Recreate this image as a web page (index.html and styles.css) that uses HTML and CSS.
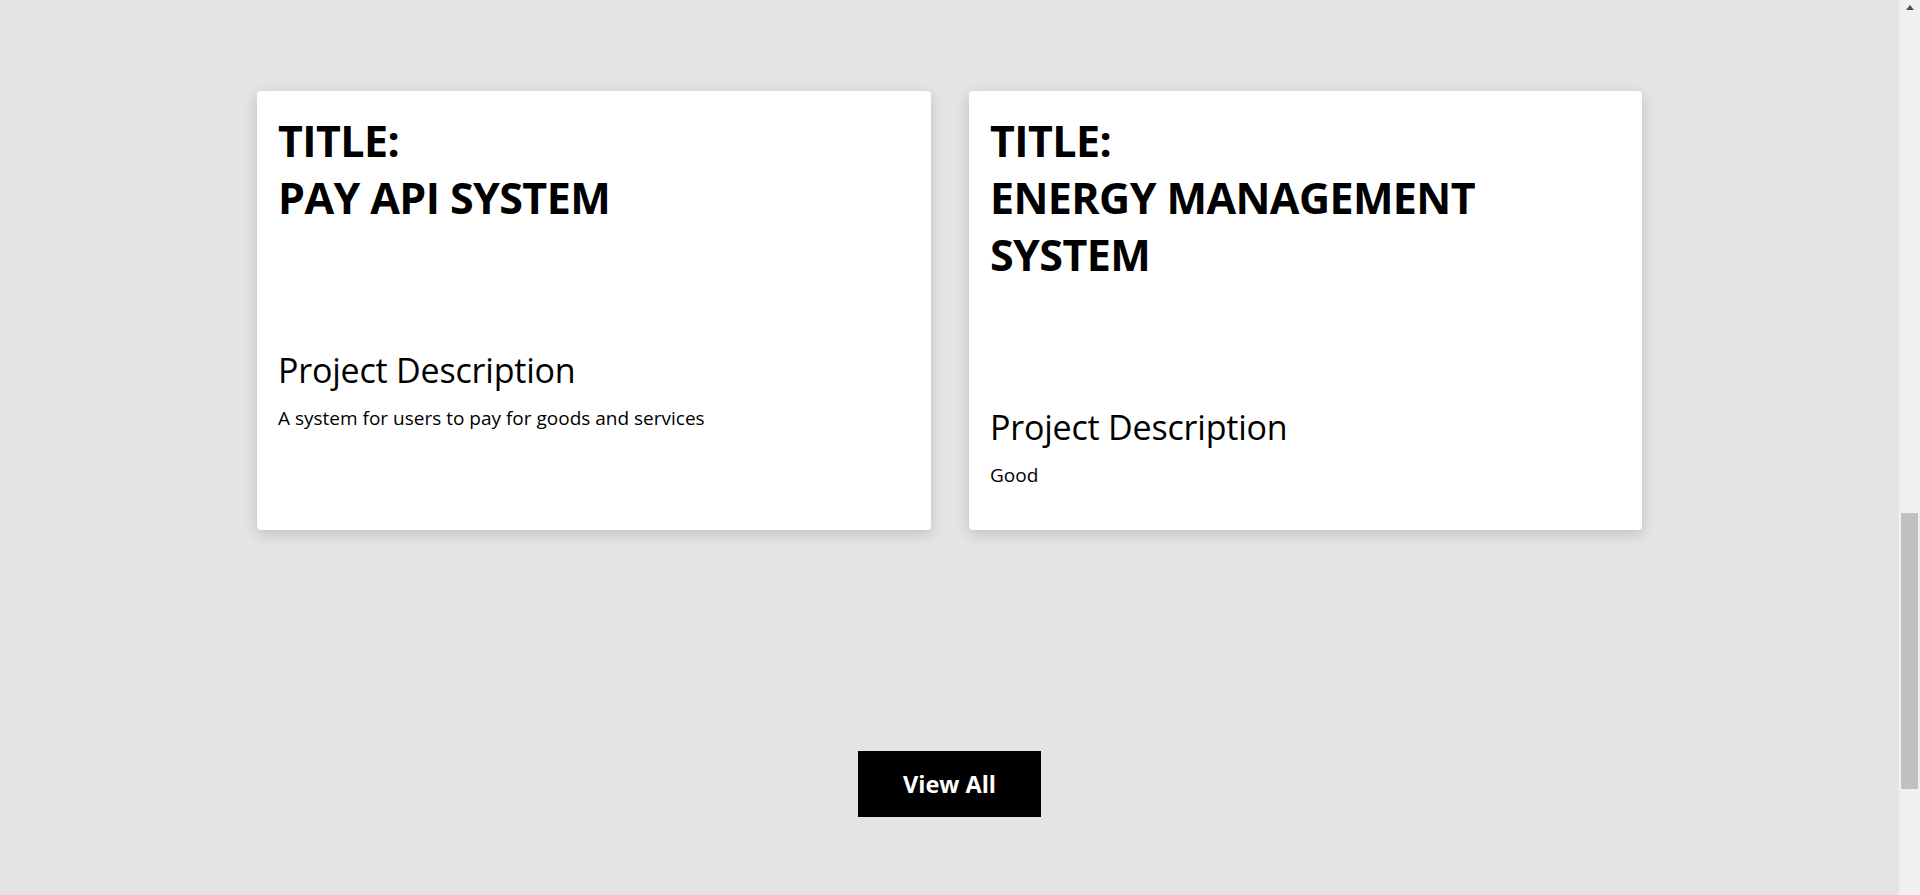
FILE: index.html
```html
<!DOCTYPE html>
<html lang="en">
<head>
<meta charset="utf-8">
<title>Projects</title>
<link rel="stylesheet" href="styles.css">
</head>
<body>
<div class="viewport">
  <main class="page">
    <section class="projects">
      <article class="card">
        <h2 class="card-title">TITLE:<br>PAY API SYSTEM</h2>
        <div class="card-media"></div>
        <h3 class="card-sub">Project Description</h3>
        <p class="card-text">A system for users to pay for goods and services</p>
      </article>
      <article class="card">
        <h2 class="card-title">TITLE:<br>ENERGY MANAGEMENT SYSTEM</h2>
        <div class="card-media"></div>
        <h3 class="card-sub">Project Description</h3>
        <p class="card-text">Good</p>
      </article>
    </section>
    <div class="actions">
      <a class="btn" href="#">View All</a>
    </div>
  </main>
  <div class="scrollbar">
    <div class="sb-arrow"></div>
    <div class="sb-track"><div class="sb-thumb"></div></div>
  </div>
</div>
</body>
</html>
```

FILE: styles.css
```css
* { box-sizing: border-box; }
html, body { margin: 0; padding: 0; }
body {
  background: #e4e4e4;
  font-family: "Open Sans", "Noto Sans", sans-serif;
  color: #000;
  overflow: hidden;
}
.viewport {
  display: flex;
  height: 895px;
}
.page {
  flex: 1;
  display: flex;
  flex-direction: column;
  align-items: center;
  padding-top: 91px;
}
.projects {
  display: grid;
  grid-template-columns: 674px 673px;
  column-gap: 38px;
}
.card {
  background: #fff;
  border-radius: 4px;
  box-shadow: 0 4px 14px rgba(0, 0, 0, 0.16);
  padding: 21px 21px 34px;
  height: 439px;
}
.card-title {
  margin: 0;
  font-size: 43px;
  line-height: 57px;
  font-weight: 700;
  letter-spacing: -0.6px;
}
.card-media {
  height: 122px;
}
.card-sub {
  margin: 0;
  font-size: 34px;
  line-height: 44px;
  font-weight: 400;
  letter-spacing: -0.2px;
}
.card-text {
  margin: 13px 0 0;
  font-size: 19px;
  line-height: 26px;
}
.actions {
  margin-top: 221px;
}
.btn {
  display: flex;
  align-items: center;
  justify-content: center;
  width: 183px;
  height: 66px;
  background: #000;
  color: #fff;
  text-decoration: none;
  font-weight: 700;
  font-size: 23.5px;
}
.scrollbar {
  width: 21px;
  background: #f0f0f0;
  display: flex;
  flex-direction: column;
}
.sb-arrow {
  height: 16px;
  display: flex;
  justify-content: center;
  padding-top: 5px;
}
.sb-arrow::before {
  content: "";
  width: 0;
  height: 0;
  border-left: 4.5px solid transparent;
  border-right: 4.5px solid transparent;
  border-bottom: 5px solid #505050;
}
.sb-track {
  flex: 1;
  padding: 497px 2px 0;
}
.sb-thumb {
  height: 276px;
  background: #c0c0c0;
}
```
